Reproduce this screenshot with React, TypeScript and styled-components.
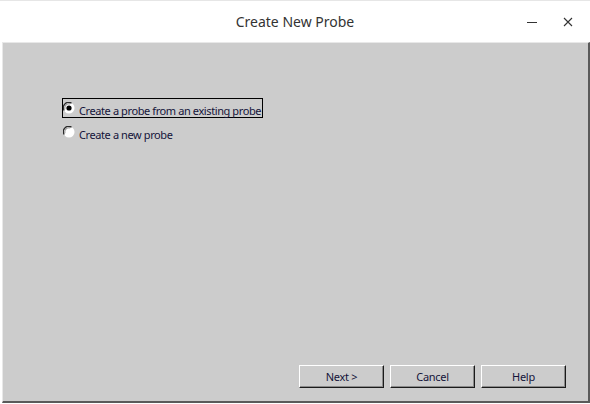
import React, { useState } from "react";
import styled, { createGlobalStyle } from "styled-components";

const Global = createGlobalStyle`
  html, body { margin: 0; padding: 0; background: #ffffff; }
  body { font-family: "Noto Sans", "Open Sans", sans-serif; }
  * { box-sizing: border-box; }
`;

const Window = styled.div`
  width: 590px;
  height: 404px;
  display: flex;
  flex-direction: column;
  background: #ffffff;
  border-top: 1px solid #e6e6e6;
`;

const TitleBar = styled.div`
  height: 41px;
  display: grid;
  grid-template-columns: 1fr auto 1fr;
  align-items: center;
  background: #ffffff;
`;

const Title = styled.div`
  grid-column: 2;
  font-size: 14px;
  color: #333333;
`;

const Controls = styled.div`
  grid-column: 3;
  justify-self: end;
  display: flex;
  align-items: center;
  gap: 22px;
  padding-right: 15px;
`;

const CtrlButton = styled.button`
  width: 14px;
  height: 14px;
  padding: 0;
  border: 0;
  background: transparent;
  display: flex;
  align-items: center;
  justify-content: center;
`;

const Body = styled.div`
  flex: 1;
  display: flex;
  flex-direction: column;
  background: #cccccc;
  margin-left: 2px;
  border-left: 1px solid #e8e8e8;
  border-top: 1px solid #e8e8e8;
  border-right: 2px solid #5a5a5a;
  border-bottom: 2px solid #5a5a5a;
  margin-bottom: 1px;
`;

const Options = styled.div`
  display: flex;
  flex-direction: column;
  align-items: flex-start;
  gap: 4px;
  padding: 55px 0 0 59px;
  flex: 1;
`;

const Option = styled.label<{ $focused?: boolean }>`
  display: flex;
  align-items: center;
  gap: 4px;
  height: 20px;
  padding: 0 1px 0 0;
  border: 1px solid ${(p) => (p.$focused ? "#000000" : "transparent")};
  font-size: 11px;
  letter-spacing: -0.4px;
  color: #14143a;
  cursor: default;
`;

const RadioText = styled.span`
  position: relative;
  top: 2px;
`;

const Radio = ({ checked }: { checked: boolean }) => (
  <svg width="12" height="12" viewBox="0 0 12 12">
    <circle cx="6" cy="6" r="5.5" fill="#ffffff" />
    <path d="M1.2 8.5 A5.3 5.3 0 0 1 8.5 1.2" stroke="#2a2a2a" strokeWidth="1.3" fill="none" />
    <path d="M1.9 7.2 A4.3 4.3 0 0 1 7.2 1.9" stroke="#8a8a8a" strokeWidth="1" fill="none" />
    {checked && <circle cx="6" cy="6" r="2.6" fill="#000000" />}
  </svg>
);

const ButtonRow = styled.div`
  display: flex;
  justify-content: flex-end;
  gap: 6px;
  padding: 0 22px 13px 0;
`;

const PushButton = styled.button`
  width: 85px;
  height: 23px;
  background: #cccccc;
  font-family: "Noto Sans", "Open Sans", sans-serif;
  font-size: 11px;
  letter-spacing: -0.3px;
  color: #14143a;
  border-top: 1px solid #ffffff;
  border-left: 1px solid #ffffff;
  border-right: 1px solid #1a1a1a;
  border-bottom: 1px solid #1a1a1a;
  box-shadow: inset -1px -1px 0 #8a8a8a;
  padding: 0;
`;

export default function App() {
  const [choice, setChoice] = useState(0);
  return (
    <>
      <Global />
      <Window>
        <TitleBar>
          <Title>Create New Probe</Title>
          <Controls>
            <CtrlButton aria-label="Minimize">
              <svg width="12" height="12" viewBox="0 0 12 12">
                <line x1="1" y1="6.5" x2="11" y2="6.5" stroke="#333" strokeWidth="1" />
              </svg>
            </CtrlButton>
            <CtrlButton aria-label="Close">
              <svg width="12" height="12" viewBox="0 0 12 12">
                <path d="M2 2 L10 10 M10 2 L2 10" stroke="#333" strokeWidth="1.1" />
              </svg>
            </CtrlButton>
          </Controls>
        </TitleBar>
        <Body>
          <Options>
            <Option $focused onClick={() => setChoice(0)}>
              <Radio checked={choice === 0} />
              <RadioText>Create a probe from an existing probe</RadioText>
            </Option>
            <Option onClick={() => setChoice(1)}>
              <Radio checked={choice === 1} />
              <RadioText>Create a new probe</RadioText>
            </Option>
          </Options>
          <ButtonRow>
            <PushButton>Next &gt;</PushButton>
            <PushButton>Cancel</PushButton>
            <PushButton>Help</PushButton>
          </ButtonRow>
        </Body>
      </Window>
    </>
  );
}
